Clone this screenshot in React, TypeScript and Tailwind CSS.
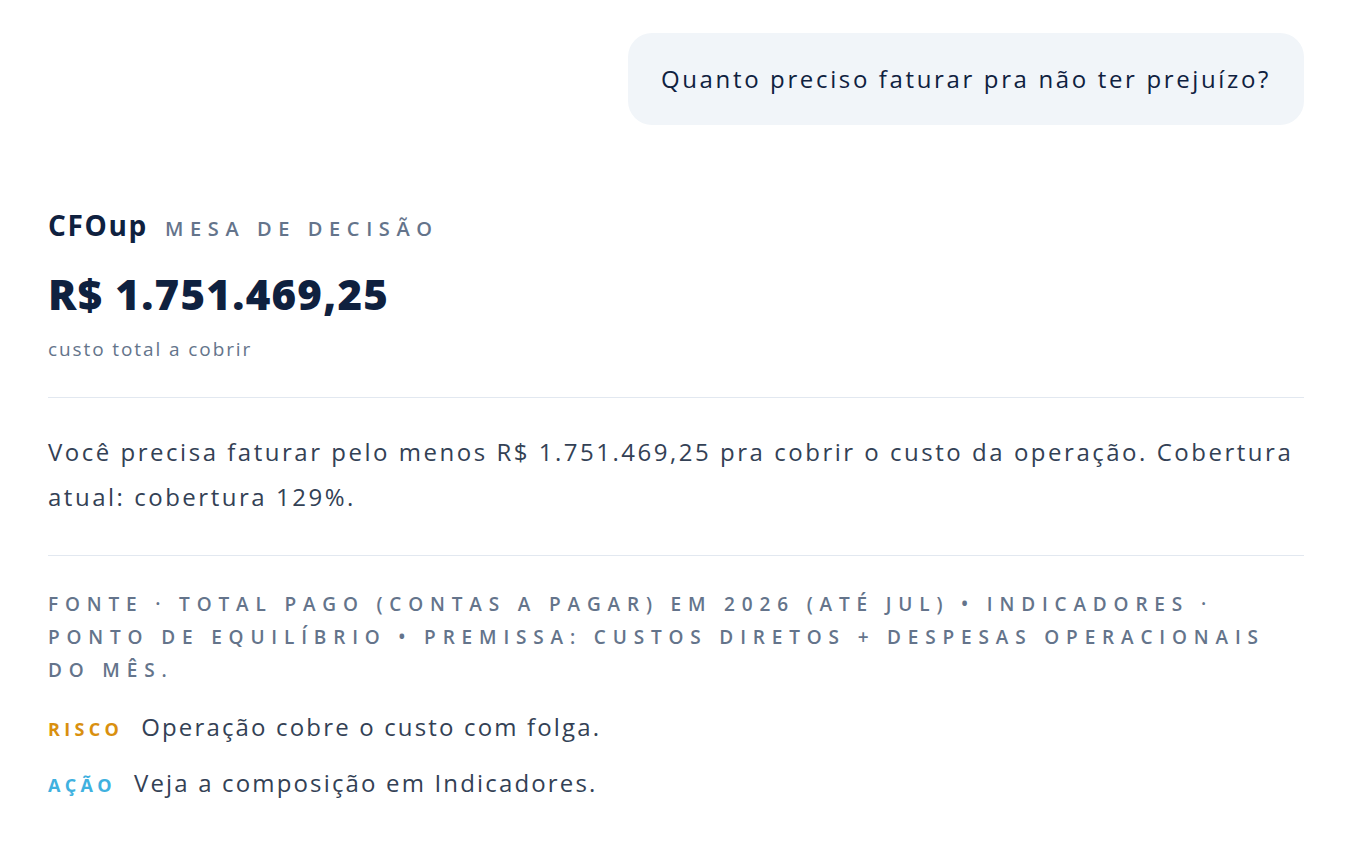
import React from "react";

const font = { fontFamily: '"Open Sans", "Noto Sans", sans-serif' };

export default function App() {
  return (
    <div className="min-h-screen bg-white text-[#0f213f]" style={font}>
      <div className="px-12 pt-[33px] pb-10">
        {/* user message */}
        <div className="flex justify-end">
          <div className="rounded-[24px] bg-[#f1f5f9] px-[33px] py-[30px] text-[24px] leading-[32px] tracking-[0.11em] text-[#0f213f]">
            Quanto preciso faturar pra não ter prejuízo?
          </div>
        </div>

        {/* answer card */}
        <div className="mt-[84px]">
          <div className="flex items-baseline gap-[17px]">
            <span className="text-[28px] font-bold leading-[32px] tracking-[0.06em] text-[#0f213f]">CFOup</span>
            <span className="text-[20px] font-semibold uppercase tracking-[0.33em] text-[#64748b]">
              Mesa de decisão
            </span>
          </div>
          <div className="mt-[26px] text-[42px] font-extrabold leading-[48px] tracking-[0.03em] text-[#0f213f]">
            R$ 1.751.469,25
          </div>
          <div className="mt-[17px] text-[19px] leading-[28px] tracking-[0.1em] text-[#64748b]">
            custo total a cobrir
          </div>

          <div className="mt-[34px] h-px bg-[#e2e8f0]" />

          <p className="mt-[31px] text-[24px] leading-[45px] tracking-[0.105em] text-[#334155]">
            Você precisa faturar pelo menos R$ 1.751.469,25 pra cobrir o custo da operação. Cobertura
            <br />
            atual: cobertura 129%.
          </p>

          <div className="mt-[36px] h-px bg-[#e2e8f0]" />

          <p className="mt-[32px] text-[19px] font-semibold uppercase leading-[33px] tracking-[0.36em] text-[#64748b]">
            Fonte · Total pago (contas a pagar) em 2026 (até jul) • Indicadores ·
            <br />
            Ponto de equilíbrio • Premissa: custos diretos + despesas operacionais
            <br />
            do mês.
          </p>

          <div className="mt-[20px] flex items-baseline gap-[18px]">
            <span className="text-[18px] font-bold uppercase tracking-[0.24em] text-[#d9900f]">Risco</span>
            <span className="text-[24px] leading-[40px] tracking-[0.09em] text-[#334155]">
              Operação cobre o custo com folga.
            </span>
          </div>
          <div className="mt-[16px] flex items-baseline gap-[18px]">
            <span className="text-[18px] font-bold uppercase tracking-[0.24em] text-[#3fb1df]">Ação</span>
            <span className="text-[24px] leading-[40px] tracking-[0.09em] text-[#334155]">
              Veja a composição em Indicadores.
            </span>
          </div>
        </div>
      </div>
    </div>
  );
}
